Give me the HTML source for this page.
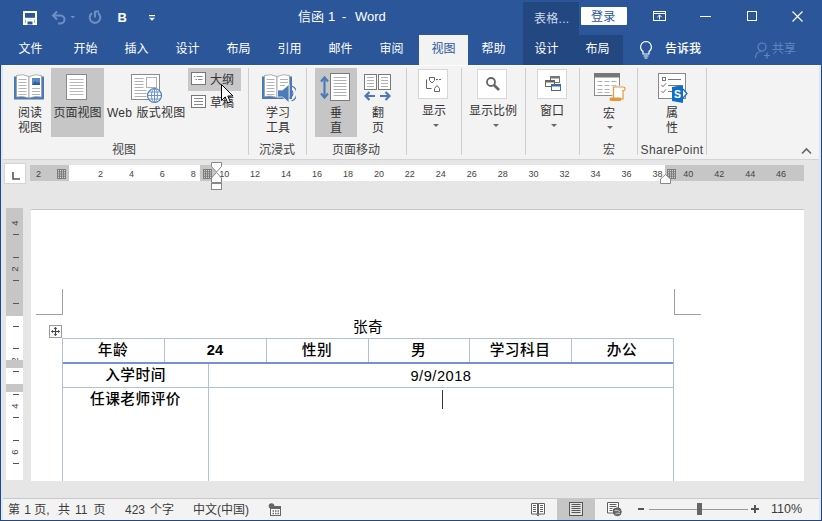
<!DOCTYPE html>
<html lang="zh-CN"><head><meta charset="utf-8"><title>信函 1 - Word</title>
<style>
html,body{margin:0;padding:0;}
body{width:822px;height:521px;overflow:hidden;position:relative;background:#e6e6e6;font-family:"Liberation Sans","Noto Sans CJK SC",sans-serif;font-size:12px;color:#333;}
.a{position:absolute;}
.t{position:absolute;white-space:nowrap;line-height:16px;height:16px;}
.c{text-align:center;}
#title{left:0;top:0;width:822px;height:65px;background:#2b579a;z-index:2;}
#title .t{color:#fff;}
#ribbon{left:0;top:64px;width:822px;height:95px;background:#f3f3f3;border-bottom:1px solid #d4d4d4;}
.sep{position:absolute;top:4px;width:1px;height:87px;background:#cecece;}
.sel{position:absolute;background:#c6c6c6;}
.box{position:absolute;background:#fff;border:1px solid #d6d6d6;box-sizing:border-box;}
.gl{color:#444;}
.arr{position:absolute;width:0;height:0;border-left:3px solid transparent;border-right:3px solid transparent;border-top:3px solid #666;}
#status{left:0;top:498px;width:822px;height:22px;background:#f3f3f3;border-top:1px solid #c8c8c8;}
#status .t{color:#3b3b3b;top:3px;}
.rn{position:absolute;top:166px;height:15px;line-height:15px;font-size:9px;color:#444;width:20px;margin-left:-10px;text-align:center;}
.vt{position:absolute;left:13px;width:6px;height:1px;background:#555;}
.vn{position:absolute;left:7px;width:16px;height:12px;line-height:12px;font-size:9.500px;color:#444;text-align:center;transform:rotate(-90deg);}
.cell{position:absolute;font-size:14.67px;line-height:20px;height:20px;text-align:center;color:#000;white-space:nowrap;}
.b{font-weight:500;letter-spacing:0.5px;}
.bb{font-weight:bold;}
</style></head><body>

<!-- TITLE BAR -->
<div id="title" class="a">
  <div class="a" style="left:523px;top:2px;width:56px;height:33px;background:#234781;"></div>
  <div class="a" style="left:523px;top:35px;width:100px;height:30px;background:#234781;"></div>
  <div class="a" style="left:419px;top:35px;width:49px;height:30px;background:#f3f3f3;"></div>
  <!-- QAT icons -->
  <svg class="a" style="left:22px;top:10px" width="16" height="16" viewBox="0 0 16 16"><path d="M2 2h12v12h-12z" fill="none" stroke="#fff" stroke-width="2"/><rect x="2" y="7.800" width="12" height="2" fill="#fff"/><rect x="3.500" y="9.500" width="9" height="5" fill="#fff"/><rect x="5.500" y="11.500" width="5" height="3" fill="#2b579a"/></svg>
  <svg class="a" style="left:50px;top:9px" width="34" height="16" viewBox="0 0 34 16"><path d="M3.500 6.500h7a4 4 0 0 1 0 8h-2.500" fill="none" stroke="#6f8fc4" stroke-width="2"/><path d="M7 2.500L3 6.500l4 4" fill="none" stroke="#6f8fc4" stroke-width="2"/><path d="M20.500 7h4.500l-2.250 2.500z" fill="#6f8fc4"/></svg>
  <svg class="a" style="left:86px;top:9px" width="18" height="16" viewBox="0 0 18 16"><path d="M6 4.200a5.300 5.300 0 1 0 6 0" fill="none" stroke="#6f8fc4" stroke-width="2.100"/><path d="M9 2v6.500M9 2.500h4" fill="none" stroke="#6f8fc4" stroke-width="2.100"/></svg>
  <div class="t" style="left:117.500px;top:9.500px;font-weight:bold;font-size:13px;">B</div>
  <svg class="a" style="left:148px;top:14px" width="8" height="8" viewBox="0 0 8 8"><rect x="1" y="1" width="6" height="1.200" fill="#fff"/><path d="M1 3.800h6l-3 3z" fill="#fff"/></svg>
  <div class="t" style="left:298px;top:9px;font-size:13px;">信函</div><div class="t" style="left:328px;top:9px;font-size:13px;">1</div><div class="t" style="left:342px;top:9px;font-size:13px;">-</div><div class="t" style="left:355px;top:9px;font-size:13px;">Word</div>
  <div class="t" style="left:534px;top:10.500px;font-size:12px;color:#c9d6ea !important;letter-spacing:0.3px;"><span style="color:#cfd9ea">表格...</span></div>
  <div class="a c" style="left:581px;top:7px;width:46px;height:18px;background:#fff;border-radius:1px;"><span class="t" style="left:10px;top:2px;color:#2b579a !important;letter-spacing:0.3px;"><span style="color:#2b579a">登录</span></span></div>
  <!-- window buttons -->
  <svg class="a" style="left:652px;top:10px" width="15" height="12" viewBox="0 0 15 12"><rect x="1.500" y="1.500" width="12" height="9" fill="none" stroke="#fff" stroke-width="1"/><path d="M1.500 3.500h12" stroke="#fff"/><path d="M7.500 9.500V5M5.300 7.200L7.500 5l2.200 2.200" fill="none" stroke="#fff" stroke-width="1"/></svg>
  <div class="a" style="left:700px;top:16px;width:11px;height:1px;background:#fff;"></div>
  <div class="a" style="left:747px;top:11px;width:10px;height:10px;border:1px solid #fff;box-sizing:border-box;"></div>
  <svg class="a" style="left:791px;top:10px" width="13" height="13" viewBox="0 0 13 13"><path d="M1.500 1.500l10 10M11.500 1.500l-10 10" stroke="#fff" stroke-width="1.100"/></svg>
  <!-- tabs -->
  <div class="t c" style="left:5px;top:41px;width:51px;">文件</div>
  <div class="t c" style="left:60px;top:41px;width:51px;">开始</div>
  <div class="t c" style="left:111px;top:41px;width:51px;">插入</div>
  <div class="t c" style="left:162px;top:41px;width:51px;">设计</div>
  <div class="t c" style="left:213px;top:41px;width:51px;">布局</div>
  <div class="t c" style="left:264px;top:41px;width:51px;">引用</div>
  <div class="t c" style="left:315px;top:41px;width:51px;">邮件</div>
  <div class="t c" style="left:366px;top:41px;width:51px;">审阅</div>
  <div class="t c" style="left:418px;top:41px;width:51px;"><span style="color:#2b579a">视图</span></div>
  <div class="t c" style="left:468px;top:41px;width:51px;">帮助</div>
  <div class="t c" style="left:521px;top:41px;width:51px;">设计</div>
  <div class="t c" style="left:572px;top:41px;width:51px;">布局</div>
  <svg class="a" style="left:638px;top:39.500px" width="16" height="19" viewBox="0 0 16 19"><path d="M8 1.5a5.5 5.500 0 0 0-3 10v2.500h6V11.500a5.5 5.500 0 0 0-3-10z" fill="none" stroke="#fff" stroke-width="1.2"/><path d="M5.500 16h5M6.500 18h3" stroke="#fff" stroke-width="1.1"/></svg>
  <div class="t" style="left:665px;top:41px;font-weight:500;">告诉我</div>
  <svg class="a" style="left:753.500px;top:40.500px" width="18" height="18" viewBox="0 0 18 18"><circle cx="8" cy="6" r="4" fill="none" stroke="#6285c0" stroke-width="1.200"/><path d="M1.500 17c0-4 2.500-6.500 6-6.500" fill="none" stroke="#6285c0" stroke-width="1.200"/><path d="M10 14.500h6M13 11.500v6" stroke="#6285c0" stroke-width="1.200"/></svg>
  <div class="t" style="left:772px;top:41px;"><span style="color:#6285c0">共享</span></div>
</div>

<!-- RIBBON -->
<div id="ribbon" class="a">
  <div class="a" style="left:0;top:1px;width:822px;height:1px;background:#fbfbfb;"></div>
  <!-- selected / hover backgrounds (coords relative to ribbon top=64) -->
  <div class="sel" style="left:51px;top:4px;width:53px;height:69px;"></div>
  <div class="sel" style="left:188px;top:4px;width:53px;height:23px;background:#c8c8c8;"></div>
  <div class="sel" style="left:315px;top:4px;width:42px;height:69px;"></div>
  <div class="sep" style="left:248px;"></div>
  <div class="sep" style="left:306px;"></div>
  <div class="sep" style="left:406px;"></div>
  <div class="sep" style="left:461px;"></div>
  <div class="sep" style="left:525px;"></div>
  <div class="sep" style="left:579px;"></div>
  <div class="sep" style="left:637px;"></div>
  <div class="sep" style="left:706px;"></div>

  <!-- Read mode icon -->
  <svg class="a" style="left:13px;top:9px" width="33" height="28" viewBox="0 0 33 28">
    <path d="M1 3.500h3v21h-3zM28 3.500h3v21h-3z" fill="#4a7ab8"/>
    <path d="M1 23.500h30v3h-30z" fill="#4a7ab8"/>
    <path d="M3.500 2.500q6-2 12.500 1v21.500q-6.500-2.500-12.500-1z" fill="#fff" stroke="#9a9a9a" stroke-width="0.800"/>
    <path d="M28.500 2.500q-6-2-12.500 1v21.500q6.500-2.500 12.500-1z" fill="#fff" stroke="#9a9a9a" stroke-width="0.800"/>
    <path d="M5.500 6.500h8M5.500 9.500h8M5.500 12.500h8M5.500 15.500h8M5.500 18.500h8M5.500 21.500h8M19 15.500h8M19 18.500h8M19 21.500h8" stroke="#b4b4b4" stroke-width="1"/>
    <rect x="19" y="5" width="8" height="7" fill="#5b8ac6"/>
    <path d="M19 12l3-4 2 2 1.500-1.500 1.500 2v1.500z" fill="#2f5f9f"/>
  </svg>
  <div class="t c" style="left:10px;top:41px;width:40px;">阅读</div>
  <div class="t c" style="left:10px;top:55.500px;width:40px;">视图</div>

  <!-- Print layout icon -->
  <svg class="a" style="left:66px;top:10px" width="21" height="26" viewBox="0 0 21 26">
    <rect x="0.500" y="0.500" width="20" height="25" fill="#fff" stroke="#8a8a8a"/>
    <path d="M3.500 5.500h14M3.500 8.500h14M3.500 11.500h14M3.500 14.500h14M3.500 17.500h14M3.500 20.500h14" stroke="#b8b8b8"/>
  </svg>
  <div class="t c" style="left:51px;top:41px;width:53px;">页面视图</div>

  <!-- Web layout icon -->
  <svg class="a" style="left:131px;top:10px" width="32" height="30" viewBox="0 0 32 30">
    <rect x="0.500" y="0.500" width="28" height="25" fill="#fff" stroke="#8a8a8a"/>
    <path d="M3.500 4.500h9M3.500 7.500h9M3.500 10.500h9M3.500 13.500h9M3.500 16.500h12M3.500 19.500h12M3.500 22.500h12" stroke="#b0b0b0"/>
    <rect x="15.500" y="3.500" width="10" height="10" fill="#fff" stroke="#b0b0b0"/>
    <circle cx="23.500" cy="21.500" r="7" fill="#fff" stroke="#4a7ab8" stroke-width="1.200"/>
    <ellipse cx="23.500" cy="21.500" rx="3" ry="7" fill="none" stroke="#5a8ac8" stroke-width="0.900"/>
    <path d="M23.500 14.500v14M16.500 21.500h14M17.500 18h12M17.500 25h12" stroke="#5a8ac8" stroke-width="0.900"/>
  </svg>
  <div class="t" style="left:107px;top:41px;letter-spacing:0.200px;word-spacing:1px;">Web 版式视图</div>

  <!-- Outline / Draft -->
  <svg class="a" style="left:191px;top:8px" width="16" height="13" viewBox="0 0 16 13">
    <rect x="0.500" y="0.500" width="14" height="12" fill="#fff" stroke="#777"/>
    <path d="M3 4.500h1.500M5.500 4.500h6M4.500 7.500h1.500M7 7.500h4.500" stroke="#888"/>
  </svg>
  <div class="t" style="left:210px;top:8px;">大纲</div>
  <svg class="a" style="left:191px;top:31px" width="16" height="13" viewBox="0 0 16 13">
    <rect x="0.500" y="0.500" width="14" height="12" fill="#fff" stroke="#777"/>
    <path d="M3 3.500h9M3 6.500h9M3 9.500h9" stroke="#888"/>
  </svg>
  <div class="t" style="left:210px;top:31px;">草稿</div>
  <!-- mouse cursor -->
  <svg class="a" style="left:220px;top:19px" width="14" height="22" viewBox="0 0 14 22">
    <path d="M1.500 1.500v16l3.700-3.600 2.600 6.200 2.600-1.100-2.600-6h5.200z" fill="#fff" stroke="#000" stroke-width="1" stroke-linejoin="miter"/>
  </svg>

  <!-- Learning tools -->
  <svg class="a" style="left:261px;top:9px" width="35" height="30" viewBox="0 0 35 30">
    <path d="M1 3.500h3v21h-3zM28 3.500h3v21h-3z" fill="#4a7ab8"/>
    <path d="M1 23h30v3h-30z" fill="#4a7ab8"/>
    <path d="M3.500 2.500q6-2 12.500 1v21q-6.500-2.500-12.500-1z" fill="#fff" stroke="#9a9a9a" stroke-width="0.800"/>
    <path d="M28.500 2.500q-6-2-12.500 1v21q6.500-2.500 12.500-1z" fill="#fff" stroke="#9a9a9a" stroke-width="0.800"/>
    <path d="M5.500 6.500h8M5.500 9.500h8M5.500 12.500h8M5.500 15.500h8M5.500 18.500h8M5.500 21.500h8M19 6.500h8M19 9.500h8M19 12.500h5" stroke="#b4b4b4"/>
    <path d="M16.500 17h5l6.500-5.500v18l-6.500-5.500h-5z" fill="#4a7ab8" stroke="#f3f3f3" stroke-width="0.800"/>
    <path d="M29.500 16.500a4.500 4.500 0 0 1 0 8M30.500 13a8 8 0 0 1 0 15" fill="none" stroke="#4a7ab8" stroke-width="1.200"/>
  </svg>
  <div class="t c" style="left:258px;top:41px;width:40px;">学习</div>
  <div class="t c" style="left:258px;top:55.500px;width:40px;">工具</div>

  <!-- Vertical -->
  <svg class="a" style="left:320px;top:9px" width="31" height="29" viewBox="0 0 31 29">
    <rect x="10.500" y="0.500" width="19" height="27" fill="#fff" stroke="#7a7a7a"/>
    <path d="M13.500 4.500h13M13.500 7.500h13M13.500 10.500h13M13.500 13.500h13M13.500 16.500h13M13.500 19.500h13M13.500 22.500h13" stroke="#b0b0b0"/>
    <path d="M4.500 5.500v18" stroke="#4a7ab8" stroke-width="2.200"/>
    <path d="M1 8.500L4.500 4.500l3.500 4M1 20.500L4.500 24.500l3.500-4" fill="none" stroke="#4a7ab8" stroke-width="2.200"/>
  </svg>
  <div class="t c" style="left:316px;top:41px;width:40px;">垂</div>
  <div class="t c" style="left:316px;top:55.500px;width:40px;">直</div>

  <!-- Side to side -->
  <svg class="a" style="left:363px;top:10px" width="29" height="29" viewBox="0 0 29 29">
    <rect x="1.500" y="0.500" width="12" height="15" fill="#fff" stroke="#7a7a7a"/>
    <rect x="15.500" y="0.500" width="12" height="15" fill="#fff" stroke="#7a7a7a"/>
    <path d="M4 3.500h7M4 6.500h7M4 9.500h7M4 12.500h7M18 3.500h7M18 6.500h7M18 9.500h7M18 12.500h7" stroke="#b0b0b0"/>
    <path d="M3 22h9M17 22h9" stroke="#4a7ab8" stroke-width="2.200"/>
    <path d="M6.500 18l-4 4 4 4M22.500 18l4 4-4 4" fill="none" stroke="#4a7ab8" stroke-width="2.200"/>
  </svg>
  <div class="t c" style="left:358px;top:41px;width:40px;">翻</div>
  <div class="t c" style="left:358px;top:55.500px;width:40px;">页</div>

  <!-- Show -->
  <div class="box" style="left:418px;top:5px;width:30px;height:30px;"></div>
  <svg class="a" style="left:425px;top:12px" width="17" height="17" viewBox="0 0 17 17">
    <path d="M1.500 12.500v-9M4 1.500h3l0 0" fill="none" stroke="#666"/>
    <path d="M1.500 12.500h5" stroke="#666"/>
    <path d="M4.500 1.500h5v3l-2.500 2.500-2.500-2.500z" fill="#fff" stroke="#666"/>
    <path d="M11 3.500h5" stroke="#666" stroke-dasharray="2 1"/>
    <path d="M9.500 15.500v-3l2.500-3 2.500 3v3z" fill="#fff" stroke="#666"/>
  </svg>
  <div class="t c" style="left:413px;top:39px;width:42px;">显示</div>
  <div class="arr" style="left:433px;top:60px;"></div>

  <!-- Zoom -->
  <div class="box" style="left:477px;top:5px;width:30px;height:30px;"></div>
  <svg class="a" style="left:485px;top:12px" width="16" height="16" viewBox="0 0 16 16">
    <circle cx="6" cy="6" r="4" fill="#fff" stroke="#666" stroke-width="1.800"/>
    <path d="M9 9l5 5" stroke="#666" stroke-width="2.600"/>
  </svg>
  <div class="t c" style="left:463px;top:39px;width:60px;">显示比例</div>
  <div class="arr" style="left:493px;top:60px;"></div>

  <!-- Window -->
  <div class="box" style="left:537px;top:5px;width:30px;height:30px;"></div>
  <svg class="a" style="left:544px;top:12px" width="18" height="17" viewBox="0 0 18 17">
    <rect x="6.500" y="0.500" width="9" height="6" fill="#fff" stroke="#777"/><rect x="6" y="0" width="10" height="2.500" fill="#777"/>
    <rect x="1.500" y="4.500" width="9" height="6" fill="#fff" stroke="#666"/><rect x="1" y="4" width="10" height="2.500" fill="#666"/>
    <rect x="7.500" y="8.500" width="9" height="6" fill="#fff" stroke="#3c6aa8"/><rect x="7" y="8" width="10" height="2.500" fill="#3c6aa8"/>
  </svg>
  <div class="t c" style="left:532px;top:39px;width:40px;">窗口</div>
  <div class="arr" style="left:551px;top:60px;"></div>

  <!-- Macros -->
  <svg class="a" style="left:593px;top:9px" width="33" height="30" viewBox="0 0 33 30">
    <rect x="1.500" y="0.500" width="25" height="22" fill="#fff" stroke="#8a8a8a"/>
    <rect x="1" y="0" width="26" height="4.500" fill="#777"/>
    <path d="M4.500 8.500h5M11.500 8.500h5M18.500 8.500h5M4.500 12.500h5M11.500 12.500h5M18.500 12.500h5M4.500 16.500h5M11.500 16.500h5M4.500 19.500h5M11.500 19.500h5" stroke="#b0b0b0"/>
    <path d="M20.500 14h9.500q2 0 2 1.800t-2 1.700v8.500h-9.500z" fill="#fff" stroke="#f3f3f3" stroke-width="2.500"/>
    <path d="M20.500 14h9.500q2 0 2 1.800t-2 1.700v8.500h-9.500z" fill="#fff" stroke="#e8963a" stroke-width="1.200"/>
    <path d="M18 24.500h9q1.500 0 1.500 1.700t-1.500 1.800h-9q-1.500 0-1.500-1.800t1.500-1.700z" fill="#e8963a"/>
  </svg>
  <div class="t c" style="left:589px;top:42px;width:40px;">宏</div>
  <div class="arr" style="left:607px;top:62px;"></div>

  <!-- SharePoint properties -->
  <svg class="a" style="left:658px;top:9px" width="31" height="31" viewBox="0 0 31 31">
    <rect x="0.500" y="0.500" width="27" height="25" fill="#fff" stroke="#888"/>
    <rect x="4.500" y="4.500" width="3" height="3" fill="#fff" stroke="#777"/>
    <path d="M10 6.500h13M10 12.500h13M10 18.500h6" stroke="#777"/>
    <path d="M3.500 12l1.500 1.800 3-3.500M3.500 18l1.500 1.800 3-3.500" fill="none" stroke="#777"/>
    <path d="M14 14l11-2v18l-11-2z" fill="#0f6fc6"/>
    <path d="M25 16l4 4.500-4 4.500" fill="#fff" stroke="#0f6fc6" stroke-width="1.300"/>
    <text x="19.500" y="25" font-family="Liberation Sans,sans-serif" font-weight="bold" font-size="10.500" fill="#fff" text-anchor="middle">S</text>
  </svg>
  <div class="t c" style="left:652px;top:41px;width:40px;">属</div>
  <div class="t c" style="left:652px;top:55.500px;width:40px;">性</div>

  <!-- group labels -->
  <div class="t c gl" style="left:94px;top:77.500px;width:60px;">视图</div>
  <div class="t c gl" style="left:247px;top:77.500px;width:60px;">沉浸式</div>
  <div class="t c gl" style="left:326px;top:77.500px;width:60px;">页面移动</div>
  <div class="t c gl" style="left:579px;top:77.500px;width:60px;">宏</div>
  <div class="t c gl" style="left:637px;top:77.500px;width:70px;font-size:12px;letter-spacing:0.350px;">SharePoint</div>
  <svg class="a" style="left:801px;top:83px" width="11" height="8" viewBox="0 0 11 8"><path d="M1 6.500l4.500-4.500 4.500 4.500" fill="none" stroke="#666" stroke-width="1.600"/></svg>
</div>

<!-- RULER + DOC -->
<div id="doc" class="a" style="left:0;top:159px;width:822px;height:339px;">
  <div class="a" style="left:4px;top:4px;width:22px;height:21px;background:#fff;border:1px solid #d4d4d4;box-sizing:border-box;"></div>
  <svg class="a" style="left:11px;top:12px" width="10" height="10" viewBox="0 0 10 10"><path d="M2 1v7h7" fill="none" stroke="#555" stroke-width="1.600"/></svg>
  <div class="a" style="left:30px;top:6px;width:774px;height:16px;background:#c6c6c6;"></div>
  <div class="a" style="left:69px;top:6px;width:595.500px;height:16px;background:#fff;"></div>
  <div class="a" style="left:200px;top:6px;width:17px;height:16px;background:#c6c6c6;"></div>
  <svg class="a" style="left:57px;top:9.5px" width="9" height="10" viewBox="0 0 9 10"><rect x="0" y="0" width="9" height="10" fill="#7c7c7c"/><rect x="1" y="1.00" width="1" height="1.2" fill="#d8d8d8"/><rect x="1" y="3.25" width="1" height="1.2" fill="#d8d8d8"/><rect x="1" y="5.50" width="1" height="1.2" fill="#d8d8d8"/><rect x="1" y="7.75" width="1" height="1.2" fill="#d8d8d8"/><rect x="3" y="1.00" width="1" height="1.2" fill="#d8d8d8"/><rect x="3" y="3.25" width="1" height="1.2" fill="#d8d8d8"/><rect x="3" y="5.50" width="1" height="1.2" fill="#d8d8d8"/><rect x="3" y="7.75" width="1" height="1.2" fill="#d8d8d8"/><rect x="5" y="1.00" width="1" height="1.2" fill="#d8d8d8"/><rect x="5" y="3.25" width="1" height="1.2" fill="#d8d8d8"/><rect x="5" y="5.50" width="1" height="1.2" fill="#d8d8d8"/><rect x="5" y="7.75" width="1" height="1.2" fill="#d8d8d8"/><rect x="7" y="1.00" width="1" height="1.2" fill="#d8d8d8"/><rect x="7" y="3.25" width="1" height="1.2" fill="#d8d8d8"/><rect x="7" y="5.50" width="1" height="1.2" fill="#d8d8d8"/><rect x="7" y="7.75" width="1" height="1.2" fill="#d8d8d8"/></svg>
  <svg class="a" style="left:203px;top:9.5px" width="9" height="10" viewBox="0 0 9 10"><rect x="0" y="0" width="9" height="10" fill="#7c7c7c"/><rect x="1" y="1.00" width="1" height="1.2" fill="#d8d8d8"/><rect x="1" y="3.25" width="1" height="1.2" fill="#d8d8d8"/><rect x="1" y="5.50" width="1" height="1.2" fill="#d8d8d8"/><rect x="1" y="7.75" width="1" height="1.2" fill="#d8d8d8"/><rect x="3" y="1.00" width="1" height="1.2" fill="#d8d8d8"/><rect x="3" y="3.25" width="1" height="1.2" fill="#d8d8d8"/><rect x="3" y="5.50" width="1" height="1.2" fill="#d8d8d8"/><rect x="3" y="7.75" width="1" height="1.2" fill="#d8d8d8"/><rect x="5" y="1.00" width="1" height="1.2" fill="#d8d8d8"/><rect x="5" y="3.25" width="1" height="1.2" fill="#d8d8d8"/><rect x="5" y="5.50" width="1" height="1.2" fill="#d8d8d8"/><rect x="5" y="7.75" width="1" height="1.2" fill="#d8d8d8"/><rect x="7" y="1.00" width="1" height="1.2" fill="#d8d8d8"/><rect x="7" y="3.25" width="1" height="1.2" fill="#d8d8d8"/><rect x="7" y="5.50" width="1" height="1.2" fill="#d8d8d8"/><rect x="7" y="7.75" width="1" height="1.2" fill="#d8d8d8"/></svg>
  <svg class="a" style="left:666.500px;top:9.500px" width="9" height="10" viewBox="0 0 9 10"><rect x="0" y="0" width="9" height="10" fill="#7c7c7c"/><rect x="1" y="1.00" width="1" height="1.2" fill="#d8d8d8"/><rect x="1" y="3.25" width="1" height="1.2" fill="#d8d8d8"/><rect x="1" y="5.50" width="1" height="1.2" fill="#d8d8d8"/><rect x="1" y="7.75" width="1" height="1.2" fill="#d8d8d8"/><rect x="3" y="1.00" width="1" height="1.2" fill="#d8d8d8"/><rect x="3" y="3.25" width="1" height="1.2" fill="#d8d8d8"/><rect x="3" y="5.50" width="1" height="1.2" fill="#d8d8d8"/><rect x="3" y="7.75" width="1" height="1.2" fill="#d8d8d8"/><rect x="5" y="1.00" width="1" height="1.2" fill="#d8d8d8"/><rect x="5" y="3.25" width="1" height="1.2" fill="#d8d8d8"/><rect x="5" y="5.50" width="1" height="1.2" fill="#d8d8d8"/><rect x="5" y="7.75" width="1" height="1.2" fill="#d8d8d8"/><rect x="7" y="1.00" width="1" height="1.2" fill="#d8d8d8"/><rect x="7" y="3.25" width="1" height="1.2" fill="#d8d8d8"/><rect x="7" y="5.50" width="1" height="1.2" fill="#d8d8d8"/><rect x="7" y="7.75" width="1" height="1.2" fill="#d8d8d8"/></svg>
  <div class="rn" style="left:38.6px;top:8px">2</div>
  <div class="rn" style="left:100.4px;top:8px">2</div>
  <div class="rn" style="left:131.4px;top:8px">4</div>
  <div class="rn" style="left:162.3px;top:8px">6</div>
  <div class="rn" style="left:193.3px;top:8px">8</div>
  <div class="rn" style="left:224.2px;top:8px">10</div>
  <div class="rn" style="left:255.1px;top:8px">12</div>
  <div class="rn" style="left:286.1px;top:8px">14</div>
  <div class="rn" style="left:317.0px;top:8px">16</div>
  <div class="rn" style="left:348.0px;top:8px">18</div>
  <div class="rn" style="left:378.9px;top:8px">20</div>
  <div class="rn" style="left:409.8px;top:8px">22</div>
  <div class="rn" style="left:440.8px;top:8px">24</div>
  <div class="rn" style="left:471.7px;top:8px">26</div>
  <div class="rn" style="left:502.7px;top:8px">28</div>
  <div class="rn" style="left:533.6px;top:8px">30</div>
  <div class="rn" style="left:564.5px;top:8px">32</div>
  <div class="rn" style="left:595.5px;top:8px">34</div>
  <div class="rn" style="left:626.4px;top:8px">36</div>
  <div class="rn" style="left:657.4px;top:8px">38</div>
  <div class="rn" style="left:688.3px;top:8px">40</div>
  <div class="rn" style="left:719.2px;top:8px">42</div>
  <div class="rn" style="left:750.2px;top:8px">44</div>
  <div class="rn" style="left:781.1px;top:8px">46</div>
  <svg class="a" style="left:211px;top:3px" width="11" height="30" viewBox="0 0 11 30"><path d="M0.500 0.500h10v4l-5 5.500-5-5.500z" fill="#fff" stroke="#888"/><path d="M0.500 20.500v-4.500l5-5.500 5 5.500v4.500z" fill="#fff" stroke="#888"/><rect x="0.500" y="21.500" width="10" height="6" fill="#fff" stroke="#888"/></svg>
  <svg class="a" style="left:660px;top:15px" width="12" height="11" viewBox="0 0 12 11"><path d="M0.500 9.500v-4.500l5-4.500 5 4.500v4.500z" fill="#fff" stroke="#888"/></svg>
  <div class="a" style="left:31px;top:50px;width:773px;height:271px;background:#fff;border-top:1px solid #c8c8c8;"></div>
  <div class="a" style="left:6px;top:49px;width:17px;height:272px;background:#fff;"></div>
  <div class="a" style="left:6px;top:49px;width:17px;height:108px;background:#c6c6c6;"></div>
  <div class="vn" style="top:194.500px">2</div>
  <div class="a" style="left:6px;top:201px;width:17px;height:8px;background:#c6c6c6;"></div>
  <div class="a" style="left:6px;top:225px;width:17px;height:8px;background:#c6c6c6;"></div>
  <div class="vt" style="top:75px"></div>
  <div class="vt" style="top:98px"></div>
  <div class="vt" style="top:121px"></div>
  <div class="vt" style="top:144px"></div>
  <div class="vt" style="top:167px"></div>
  <div class="vt" style="top:189px"></div>
  <div class="vt" style="top:212px"></div>
  <div class="vt" style="top:235px"></div>
  <div class="vt" style="top:258px"></div>
  <div class="vt" style="top:281px"></div>
  <div class="vt" style="top:304px"></div>
  <div class="vn" style="top:58px">4</div>
  <div class="vn" style="top:104px">2</div>
  <div class="vn" style="top:241px">4</div>
  <div class="vn" style="top:287px">6</div>
  <div class="a" style="left:36px;top:130px;width:26px;height:25px;border-right:1px solid #a0a0a0;border-bottom:1px solid #a0a0a0;box-sizing:content-box;"></div>
  <div class="a" style="left:674px;top:130px;width:26px;height:25px;border-left:1px solid #a0a0a0;border-bottom:1px solid #a0a0a0;"></div>
  <svg class="a" style="left:49px;top:166px" width="13" height="13" viewBox="0 0 13 13"><rect x="0.500" y="0.500" width="12" height="12" fill="#fff" stroke="#9c9c9c"/><path d="M6.500 2.500v8M2.500 6.500h8" stroke="#444" stroke-width="1.200"/><path d="M4.700 4l1.800-2 1.800 2zM4.700 9l1.800 2 1.800-2zM4 4.700l-2 1.800 2 1.800zM9 4.700l2 1.800-2 1.800z" fill="#444"/></svg>
  <div class="a" style="left:62px;top:179px;width:612px;height:1px;background:#b2bfdd;"></div>
  <div class="a" style="left:62px;top:203px;width:612px;height:2px;background:#7690d8;"></div>
  <div class="a" style="left:62px;top:228px;width:612px;height:1px;background:#b2bfdd;"></div>
  <div class="a" style="left:62px;top:179px;width:1px;height:143px;background:#b2bfdd;"></div>
  <div class="a" style="left:673px;top:179px;width:1px;height:143px;background:#b2bfdd;"></div>
  <div class="a" style="left:164px;top:179px;width:1px;height:24px;background:#b2bfdd;"></div>
  <div class="a" style="left:266px;top:179px;width:1px;height:24px;background:#b2bfdd;"></div>
  <div class="a" style="left:368px;top:179px;width:1px;height:24px;background:#b2bfdd;"></div>
  <div class="a" style="left:469px;top:179px;width:1px;height:24px;background:#b2bfdd;"></div>
  <div class="a" style="left:571px;top:179px;width:1px;height:24px;background:#b2bfdd;"></div>
  <div class="a" style="left:208px;top:205px;width:1px;height:117px;background:#b2bfdd;"></div>
  <div class="cell b" style="left:62px;top:181px;width:102px;">年龄</div>
  <div class="cell bb" style="left:164px;top:181px;width:102px;">24</div>
  <div class="cell b" style="left:266px;top:181px;width:102px;">性别</div>
  <div class="cell b" style="left:368px;top:181px;width:101px;">男</div>
  <div class="cell b" style="left:469px;top:181px;width:102px;">学习科目</div>
  <div class="cell b" style="left:571px;top:181px;width:102px;">办公</div>
  <div class="cell" style="left:268px;top:157.700px;width:200px;letter-spacing:0.300px;">张奇</div>
  <div class="cell b" style="left:62px;top:206px;width:147px;">入学时间</div>
  <div class="cell" style="left:208px;top:206.700px;width:466px;letter-spacing:0.500px;">9/9/2018</div>
  <div class="cell b" style="left:62px;top:230px;width:147px;">任课老师评价</div>
  <div class="a" style="left:442px;top:231px;width:1px;height:19px;background:#333;"></div>
</div>

<!-- STATUS -->
<div id="status" class="a">
  <div class="t" style="left:8px;">第</div><div class="t" style="left:24.300px;">1</div><div class="t" style="left:34.200px;">页,</div><div class="t" style="left:58px;">共</div><div class="t" style="left:75px;">11</div><div class="t" style="left:93.600px;">页</div>
  <div class="t" style="left:125px;">423</div><div class="t" style="left:150px;">个字</div>
  <div class="t" style="left:193px;">中文(中国)</div>
  <svg class="a" style="left:268px;top:4px" width="13" height="13" viewBox="0 0 13 13"><circle cx="3.500" cy="3" r="2.800" fill="#666"/><rect x="2.500" y="3.500" width="10" height="9" fill="#fff" stroke="#666"/><rect x="2" y="3" width="11" height="3" fill="#666"/><path d="M4.500 8h1.500M7 8h1.500M9.500 8h1.500M4.500 10.500h1.500M7 10.500h1.500M9.500 10.500h1.500" stroke="#666" stroke-width="1.300"/></svg>
  <svg class="a" style="left:531px;top:3px" width="14" height="15" viewBox="0 0 14 15"><path d="M0.500 1.500h6v10.500h-6zM7.500 1.500h6v10.500h-6z" fill="#fff" stroke="#606060"/><path d="M2 3.500h3M2 5.500h3M2 7.500h3M2 9.500h3M9 3.500h3M9 5.500h3M9 7.500h3M9 9.500h3" stroke="#606060" stroke-width="1"/><path d="M7 1v13M5.500 12.500l1.500 1.500 1.500-1.500" stroke="#606060" fill="none"/></svg>
  <div class="a" style="left:557px;top:0;width:38px;height:22px;background:#c6c6c6;"></div>
  <svg class="a" style="left:569px;top:3px" width="14" height="14" viewBox="0 0 14 14"><rect x="0.500" y="0.500" width="13" height="13" fill="#e4e4e4" stroke="#555"/><path d="M2.500 2.500h9M2.500 4.500h9M2.500 6.500h9M2.500 8.500h9M2.500 10.500h9" stroke="#555" stroke-width="1"/></svg>
  <svg class="a" style="left:607px;top:3px" width="16" height="15" viewBox="0 0 16 15"><path d="M0.500 0.500h11v6.500h-5v4h-6z" fill="#fff" stroke="#606060"/><path d="M2.500 2.500h7M2.500 4.500h7M2.500 6.500h3M2.500 8.500h3" stroke="#606060" stroke-width="1"/><circle cx="10.300" cy="9.800" r="4" fill="#6a6a6a" stroke="#555" stroke-width="0.800"/><path d="M7.500 8.500q2.500-1 5.500 1M8.500 12q2-1.500 4.500-0.500" stroke="#d0d0d0" stroke-width="0.900" fill="none"/></svg>
  <div class="a" style="left:638px;top:9px;width:6px;height:2px;background:#555;"></div>
  <div class="a" style="left:649px;top:10px;width:99px;height:1px;background:#9a9a9a;"></div>
  <div class="a" style="left:697px;top:4px;width:5px;height:12px;background:#666;"></div>
  <div class="a" style="left:751px;top:9px;width:8px;height:2px;background:#555;"></div>
  <div class="a" style="left:754px;top:6px;width:2px;height:8px;background:#555;"></div>
  <div class="t" style="left:771px;top:2.300px;font-size:12.500px;">110%</div>
</div>

<!-- window border -->
<div class="a" style="left:1px;top:65px;width:2px;height:455px;background:#dbe7f5;z-index:3;"></div>
<div class="a" style="left:0;top:0;width:1px;height:521px;background:#2b579a;z-index:3;"></div>
<div class="a" style="left:0;top:65px;width:1px;height:456px;background:#26477c;z-index:3;"></div>
<div class="a" style="left:819px;top:65px;width:2px;height:455px;background:#dbe7f5;z-index:3;"></div>
<div class="a" style="left:821px;top:0;width:1px;height:521px;background:#2b579a;z-index:3;"></div>
<div class="a" style="left:821px;top:65px;width:1px;height:456px;background:#26477c;z-index:3;"></div>
<div class="a" style="left:0;top:520px;width:822px;height:1px;background:#26477c;z-index:3;"></div>
</body></html>
